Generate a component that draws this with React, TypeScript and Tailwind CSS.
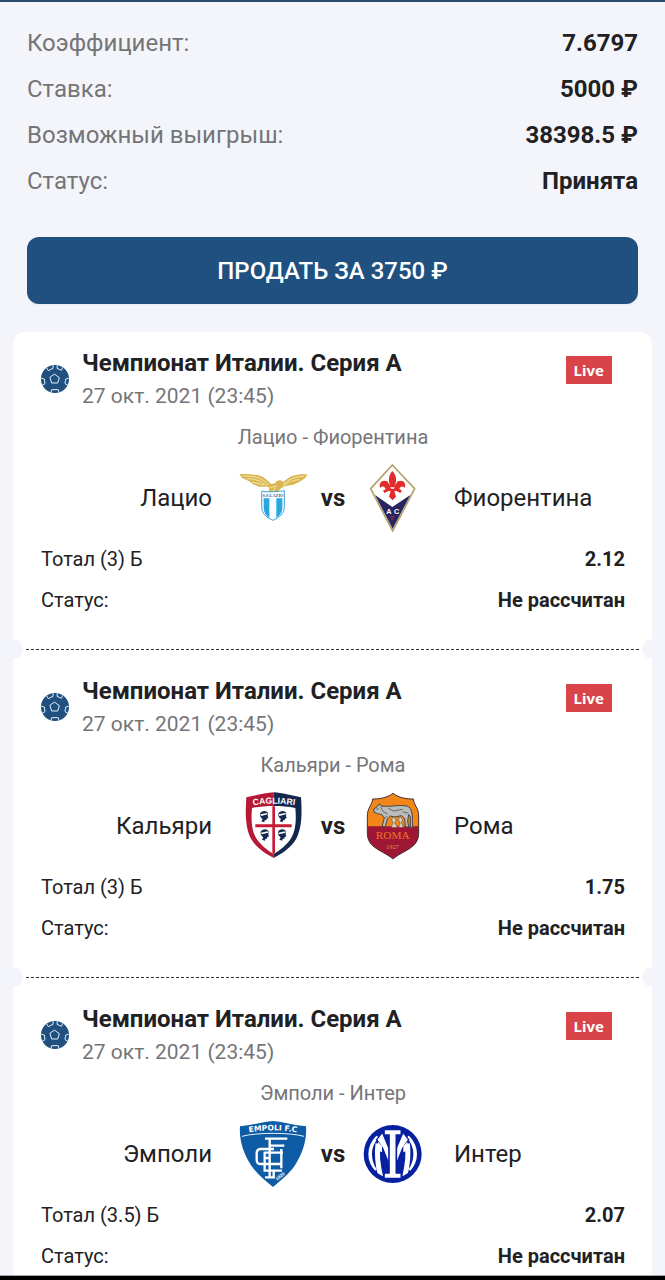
import React from "react";

type LogoName = "lazio" | "fiorentina" | "cagliari" | "roma" | "empoli" | "inter";

interface Bet {
  home: string;
  away: string;
  homeLogo: LogoName;
  awayLogo: LogoName;
  market: string;
  odds: string;
}

const bets: Bet[] = [
  { home: "Лацио", away: "Фиорентина", homeLogo: "lazio", awayLogo: "fiorentina", market: "Тотал (3) Б", odds: "2.12" },
  { home: "Кальяри", away: "Рома", homeLogo: "cagliari", awayLogo: "roma", market: "Тотал (3) Б", odds: "1.75" },
  { home: "Эмполи", away: "Интер", homeLogo: "empoli", awayLogo: "inter", market: "Тотал (3.5) Б", odds: "2.07" },
];

const summary: [string, string][] = [
  ["Коэффициент:", "7.6797"],
  ["Ставка:", "5000 ₽"],
  ["Возможный выигрыш:", "38398.5 ₽"],
  ["Статус:", "Принята"],
];

function BallIcon() {
  return (
    <svg viewBox="0 0 84 84" className="size-7 shrink-0" aria-hidden="true">
      <circle cx="42" cy="42" r="42" fill="#20507f" />
      <g fill="none" stroke="#e6eef5" strokeWidth="3" strokeLinejoin="round" strokeLinecap="round">
        <path d="M41 28 55 38 50 54H32L27 38Z" />
        <path d="M17 9 22 17 36 10 36 2M65 8 61 16 48 10 49 2M2 40 10 42 12 56 5 60M82 40 74 42 72 56 79 60M30 82 32 74H52L54 82" />
      </g>
    </svg>
  );
}

function Lazio() {
  return (
    <>
      <path
        d="M28 54C58 54 92 54 108 70L124 84 136 82 138 76 150 72 160 78C180 58 204 54 232 55L226 66 206 79 190 86 166 90 153 97 143 108 118 108 116 99 121 95 108 92 86 92 68 84 58 76 36 66Z"
        fill="#d9b64f"
      />
      <g fill="none" stroke="#f5e7ae" strokeWidth="3">
        <path d="M38 60C70 60 92 62 116 86M50 68C76 68 92 74 112 90M66 78 102 87M222 61C196 62 178 68 160 86M208 71C188 72 174 78 158 91M122 94 142 90M130 106 136 94" />
      </g>
      <path d="M95 106C116 108 140 108 163 104V151C163 174 148 184 129 193 109 184 95 174 95 151Z" fill="#f5fbff" stroke="#42a5d6" strokeWidth="3" />
      <path d="M101 127H118V186C106 178 101 168 101 151ZM139 127H157V151C157 168 152 178 139 186Z" fill="#28a6df" />
      <text x="129" y="123" textAnchor="middle" fontFamily="Liberation Serif, serif" fontSize="13" fontWeight="700" fill="#38658e">S.S.LAZIO</text>
    </>
  );
}

function Fiorentina() {
  return (
    <>
      <path d="M127 27 194 98 128 225 62 98Z" fill="#fff" stroke="#b3a06b" strokeWidth="5" />
      <path d="M75 117 127 153 181 117 128 218Z" fill="#29265f" />
      <g fill="#e32b2b">
        <path d="M127 45C141 60 140 73 134 94H121C115 73 114 60 127 45Z" />
        <path d="M123 103C122 85 112 75 103 74 92 74 87 84 90 96 96 88 105 91 107 99L99 104 104 111 117 104Z" />
        <path d="M132 103C133 85 143 75 152 74 163 74 168 84 165 96 159 88 150 91 148 99L156 104 151 111 138 104Z" />
        <path d="M108 98H147V104H108ZM122 104H133L138 122 128 133 117 122Z" />
        <path d="M118 90 111 79M137 90 144 79" stroke="#e32b2b" strokeWidth="2" />
        <circle cx="110" cy="78" r="3" />
        <circle cx="145" cy="78" r="3" />
      </g>
      <g fontFamily="Liberation Sans, sans-serif" fontWeight="700" textAnchor="middle">
        <text x="117" y="175" fontSize="22" fill="#fff">A</text>
        <text x="140" y="175" fontSize="22" fill="#fff">C</text>
        <text x="128" y="193" fontSize="18" fill="#c22063">F</text>
      </g>
    </>
  );
}

function MoorHead({ x, y }: { x: number; y: number }) {
  return (
    <g transform={`translate(${x} ${y})`}>
      <path d="M-12 -7C-8 -17 8 -18 12 -8L11 0 13 6 8 8 7 13 2 13 1 19 -8 16 -4 9C-10 5 -13 -1 -12 -7Z" fill="#13294f" />
      <path d="M-11 -5 9 -9 11 -5 -9 0Z" fill="#fff" />
    </g>
  );
}

function Cagliari() {
  return (
    <>
      <path d="M131 19C107 20 77 29 49 34 46 78 45 125 64 160 81 187 107 204 131 216Z" fill="#b71834" />
      <path d="M131 19C155 20 185 29 213 34 216 78 217 125 198 160 181 187 155 204 131 216Z" fill="#14274e" />
      <path d="M66 66C104 58 158 58 196 66 199 99 198 132 184 155 171 177 150 192 131 204 112 192 91 177 78 155 64 132 63 99 66 66Z" fill="#fff" />
      <path d="M127 61H135V201L131 204 127 201ZM76 115H185V124H76Z" fill="#c51c37" />
      <MoorHead x={102} y={90} />
      <MoorHead x={157} y={90} />
      <MoorHead x={104} y={145} />
      <MoorHead x={156} y={145} />
      <path id="cagliari-arc" d="M60 59Q131 47 204 59" fill="none" />
      <text fontFamily="Liberation Sans, sans-serif" fontSize="26" fontWeight="700" fill="#fff" textAnchor="middle">
        <textPath href="#cagliari-arc" startOffset="50%">CAGLIARI</textPath>
      </text>
    </>
  );
}

function Roma() {
  return (
    <>
      <path d="M129 22C110 37 85 39 68 39 67 57 51 67 52 91V126H206V91C207 67 191 57 190 39 173 39 148 37 129 22Z" fill="#f28618" />
      <path d="M52 121H206V143C205 187 159 193 129 219 99 193 53 187 52 143Z" fill="#9e1634" />
      <path d="M129 22C110 37 85 39 68 39 67 57 51 67 52 91V143C53 187 99 193 129 219 159 193 205 187 206 143V91C207 67 191 57 190 39 173 39 148 37 129 22Z" fill="none" stroke="#413034" strokeWidth="3" />
      <path d="M71 69 82 62 88 53 93 60 106 61C125 62 155 55 172 61 185 65 189 80 187 125H181V91L176 86 173 105 176 123H166L164 98 155 89 133 93 121 90 112 98 106 122H96L103 96 96 86 82 83 72 78Z" fill="#b9bcba" stroke="#454747" strokeWidth="3" />
      <path d="M92 63 100 77 112 84M115 67 130 75 158 70M158 78 175 81M79 69H87M104 96 111 90" fill="none" stroke="#666" strokeWidth="3" />
      <path d="M124 124 129 110 124 99 132 94 139 102 134 111 142 124M146 124 150 110 144 99 151 94 158 101 154 111 161 124" fill="#d7d1c4" stroke="#655a50" strokeWidth="2" />
      <g fontFamily="Liberation Serif, serif" textAnchor="middle">
        <text x="128" y="160" fontSize="34" fill="#e97922">ROMA</text>
        <text x="128" y="188" fontSize="19" fill="#d7955e">1927</text>
      </g>
    </>
  );
}

function Empoli() {
  return (
    <>
      <path d="M30 40C63 37 98 27 129 24 160 27 195 37 228 40 231 76 220 119 194 158 176 184 151 203 129 222 107 203 82 184 64 158 38 119 27 76 30 40Z" fill="#0e5ca6" />
      <path d="M36 70C78 58 180 58 222 70" fill="none" stroke="#e8f3fa" strokeWidth="3" />
      <path id="empoli-arc" d="M36 62Q129 42 222 62" fill="none" />
      <text fontFamily="DejaVu Sans, sans-serif" fontSize="23" fontWeight="700" fill="#fff" textAnchor="middle">
        <textPath href="#empoli-arc" startOffset="50%">EMPOLI F.C</textPath>
      </text>
      <g fill="none" stroke="#fff" strokeWidth="7">
        <path d="M172 77H105M119 74V193M119 98H163M105 193H131V172" />
        <path d="M132 108H93Q80 108 80 121V140Q80 153 93 153H132" />
        <path d="M159 119H104M104 116V173H156M104 135H119M131 153H157M154 108V166" />
      </g>
      <text x="141" y="203" transform="rotate(-38 141 203)" fontFamily="Liberation Sans, sans-serif" fontSize="14" fontWeight="700" fill="#fff">1920</text>
    </>
  );
}

function Inter() {
  return (
    <>
      <defs>
        <clipPath id="inter-disc">
          <circle cx="128" cy="123" r="73" />
        </clipPath>
      </defs>
      <circle cx="128" cy="123" r="87" fill="#0720a0" />
      <g clipPath="url(#inter-disc)">
        <g fill="none" stroke="#fff">
          <path d="M80 68Q58 92 58 123 58 152 74 174M176 68Q198 92 198 123 198 152 182 174" strokeWidth="16" />
          <path d="M84 92Q78 135 92 192M172 92Q178 135 164 192" strokeWidth="15" />
        </g>
        <g fill="#fff" stroke="#0720a0" strokeWidth="4">
          <path d="M80 80 97 58 122 118V166L98 106Z" />
          <path d="M176 80 159 58 134 118V166L158 106Z" />
        </g>
        <path d="M84 86 96 100V118L82 112ZM172 86 160 100V118L174 112Z" fill="#fff" />
      </g>
      <path d="M102 49H154V66H139V180H154V197H102V180H117V66H102Z" fill="#fff" stroke="#0720a0" strokeWidth="5" />
    </>
  );
}

const logos: Record<LogoName, { viewBox: string; title: string; Art: () => React.JSX.Element }> = {
  lazio: { viewBox: "27 24 204 204", title: "Лацио", Art: Lazio },
  fiorentina: { viewBox: "27 24 204 204", title: "Фиорентина", Art: Fiorentina },
  cagliari: { viewBox: "27 18 204 204", title: "Кальяри", Art: Cagliari },
  roma: { viewBox: "27 18 204 204", title: "Рома", Art: Roma },
  empoli: { viewBox: "27 21 204 204", title: "Эмполи", Art: Empoli },
  inter: { viewBox: "27 21 204 204", title: "Интер", Art: Inter },
};

function Logo({ name }: { name: LogoName }) {
  const { viewBox, title, Art } = logos[name];
  return (
    <svg viewBox={viewBox} className="size-17 shrink-0" role="img" aria-label={title}>
      <Art />
    </svg>
  );
}

function Row({ label, value }: { label: string; value: string }) {
  return (
    <div className="flex items-center justify-between text-xl leading-6">
      <dt>{label}</dt>
      <dd className="font-bold">{value}</dd>
    </div>
  );
}

function BetItem({ bet, last }: { bet: Bet; last: boolean }) {
  return (
    <article className={last ? "pt-4 pr-[27px] pb-[7px] pl-7" : "pt-4 pr-[27px] pb-[37px] pl-7"}>
      <header className="flex items-start">
        <div className="pt-[17px]">
          <BallIcon />
        </div>
        <div className="ml-[13px] flex-1">
          <h2 className="text-2xl leading-[30px] font-bold">Чемпионат Италии. Серия А</h2>
          <p className="mt-1 text-[21px] leading-7 text-[#757578]">27 окт. 2021 (23:45)</p>
        </div>
        <span className="mt-2 mr-[13px] flex h-7 items-center bg-[#d84448] px-2 font-['Noto_Sans',sans-serif] text-[15px] font-bold text-white">
          Live
        </span>
      </header>
      <p className="mt-[13px] text-center text-xl leading-7 text-[#757578]">
        {bet.home} - {bet.away}
      </p>
      <div className="mt-[13px] flex items-center text-2xl leading-7">
        <span className="mr-[27px] flex-1 text-right">{bet.home}</span>
        <Logo name={bet.homeLogo} />
        <span className="w-[52px] text-center font-bold">vs</span>
        <Logo name={bet.awayLogo} />
        <span className="ml-[27px] flex-1">{bet.away}</span>
      </div>
      <dl className="mt-[15px] flex flex-col gap-[17px]">
        <Row label={bet.market} value={bet.odds} />
        <Row label="Статус:" value="Не рассчитан" />
      </dl>
    </article>
  );
}

function TearLine() {
  return (
    <div className="relative mb-2.5 h-px px-[13px]" aria-hidden="true">
      <div className="h-px bg-[repeating-linear-gradient(90deg,#333_0,#333_3px,transparent_3px,transparent_5px)]" />
      <span className="absolute -top-2.5 -left-2.5 size-5 rounded-full bg-[#f4f5fa]" />
      <span className="absolute -top-2.5 -right-2.5 size-5 rounded-full bg-[#f4f5fa]" />
    </div>
  );
}

export default function App() {
  return (
    <main className="flex min-h-screen flex-col overflow-x-hidden border-t-2 border-[#2a4a6c] bg-[#f4f5fa] font-[Roboto,sans-serif] text-[#212124]">
      <dl className="flex flex-col gap-4 px-[27px] pt-[26px] text-2xl leading-[30px]">
        {summary.map(([label, value]) => (
          <div key={label} className="flex justify-between">
            <dt className="text-[#757578]">{label}</dt>
            <dd className="font-bold">{value}</dd>
          </div>
        ))}
      </dl>
      <button
        type="button"
        className="mx-[27px] mt-[41px] h-[67px] rounded-xl bg-[#20507f] text-2xl font-medium text-white shadow-xs"
      >
        ПРОДАТЬ ЗА 3750 ₽
      </button>
      <section className="mx-[13px] mt-7 flex-1 rounded-t-xl bg-white">
        {bets.map((bet, i) => (
          <React.Fragment key={bet.home}>
            {i > 0 && <TearLine />}
            <BetItem bet={bet} last={i === bets.length - 1} />
          </React.Fragment>
        ))}
      </section>
      <div className="h-[5px] border-t border-[#a8a8ac] bg-black" />
    </main>
  );
}
